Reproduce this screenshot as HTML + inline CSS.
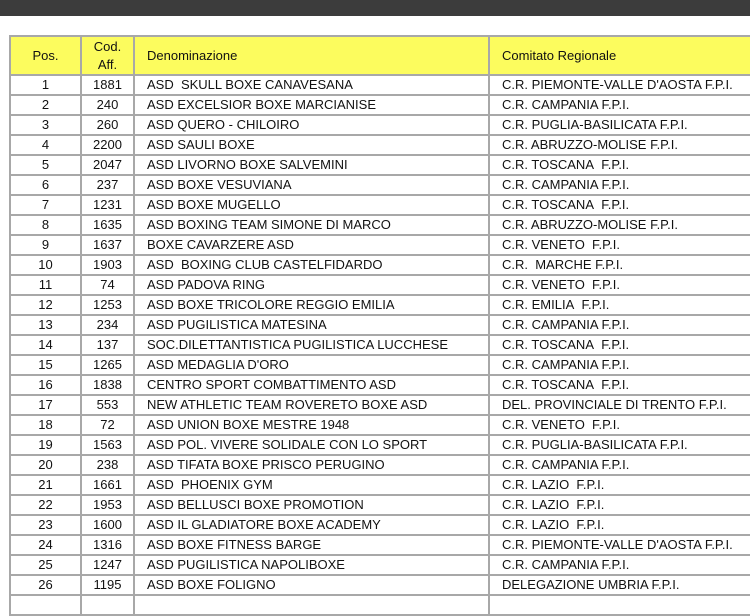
<!DOCTYPE html>
<html><head><meta charset="utf-8"><style>
html,body{margin:0;padding:0;background:#fff;width:750px;height:600px;overflow:hidden;font-family:"Liberation Sans",sans-serif;}
.bar{position:absolute;left:0;top:0;width:750px;height:16px;background:#3c3c3c;}
table{position:absolute;left:9px;top:35px;border-collapse:collapse;table-layout:fixed;width:800px;font-size:13px;letter-spacing:0;color:#111;}
td{border:2px solid #a8a8a8;height:18px;padding:0;white-space:nowrap;overflow:hidden;line-height:18px;}
tr.h td{background:#fcfc5e;height:37px;line-height:18px;}
td.c{text-align:center;}
td.l{padding-left:12px;}
</style></head><body>
<div class="bar"></div>
<table>
<colgroup><col style="width:71px"><col style="width:53px"><col style="width:355px"><col style="width:321px"></colgroup>
<tr class="h"><td class="c">Pos.</td><td class="c">Cod.<br>Aff.</td><td class="l">Denominazione</td><td class="l">Comitato Regionale</td></tr>
<tr><td class="c">1</td><td class="c">1881</td><td class="l">ASD&nbsp; SKULL BOXE CANAVESANA</td><td class="l">C.R. PIEMONTE-VALLE D'AOSTA F.P.I.</td></tr>
<tr><td class="c">2</td><td class="c">240</td><td class="l">ASD EXCELSIOR BOXE MARCIANISE</td><td class="l">C.R. CAMPANIA F.P.I.</td></tr>
<tr><td class="c">3</td><td class="c">260</td><td class="l">ASD QUERO - CHILOIRO</td><td class="l">C.R. PUGLIA-BASILICATA F.P.I.</td></tr>
<tr><td class="c">4</td><td class="c">2200</td><td class="l">ASD SAULI BOXE</td><td class="l">C.R. ABRUZZO-MOLISE F.P.I.</td></tr>
<tr><td class="c">5</td><td class="c">2047</td><td class="l">ASD LIVORNO BOXE SALVEMINI</td><td class="l">C.R. TOSCANA&nbsp; F.P.I.</td></tr>
<tr><td class="c">6</td><td class="c">237</td><td class="l">ASD BOXE VESUVIANA</td><td class="l">C.R. CAMPANIA F.P.I.</td></tr>
<tr><td class="c">7</td><td class="c">1231</td><td class="l">ASD BOXE MUGELLO</td><td class="l">C.R. TOSCANA&nbsp; F.P.I.</td></tr>
<tr><td class="c">8</td><td class="c">1635</td><td class="l">ASD BOXING TEAM SIMONE DI MARCO</td><td class="l">C.R. ABRUZZO-MOLISE F.P.I.</td></tr>
<tr><td class="c">9</td><td class="c">1637</td><td class="l">BOXE CAVARZERE ASD</td><td class="l">C.R. VENETO&nbsp; F.P.I.</td></tr>
<tr><td class="c">10</td><td class="c">1903</td><td class="l">ASD&nbsp; BOXING CLUB CASTELFIDARDO</td><td class="l">C.R.&nbsp; MARCHE F.P.I.</td></tr>
<tr><td class="c">11</td><td class="c">74</td><td class="l">ASD PADOVA RING</td><td class="l">C.R. VENETO&nbsp; F.P.I.</td></tr>
<tr><td class="c">12</td><td class="c">1253</td><td class="l">ASD BOXE TRICOLORE REGGIO EMILIA</td><td class="l">C.R. EMILIA&nbsp; F.P.I.</td></tr>
<tr><td class="c">13</td><td class="c">234</td><td class="l">ASD PUGILISTICA MATESINA</td><td class="l">C.R. CAMPANIA F.P.I.</td></tr>
<tr><td class="c">14</td><td class="c">137</td><td class="l">SOC.DILETTANTISTICA PUGILISTICA LUCCHESE</td><td class="l">C.R. TOSCANA&nbsp; F.P.I.</td></tr>
<tr><td class="c">15</td><td class="c">1265</td><td class="l">ASD MEDAGLIA D'ORO</td><td class="l">C.R. CAMPANIA F.P.I.</td></tr>
<tr><td class="c">16</td><td class="c">1838</td><td class="l">CENTRO SPORT COMBATTIMENTO ASD</td><td class="l">C.R. TOSCANA&nbsp; F.P.I.</td></tr>
<tr><td class="c">17</td><td class="c">553</td><td class="l">NEW ATHLETIC TEAM ROVERETO BOXE ASD</td><td class="l">DEL. PROVINCIALE DI TRENTO F.P.I.</td></tr>
<tr><td class="c">18</td><td class="c">72</td><td class="l">ASD UNION BOXE MESTRE 1948</td><td class="l">C.R. VENETO&nbsp; F.P.I.</td></tr>
<tr><td class="c">19</td><td class="c">1563</td><td class="l">ASD POL. VIVERE SOLIDALE CON LO SPORT</td><td class="l">C.R. PUGLIA-BASILICATA F.P.I.</td></tr>
<tr><td class="c">20</td><td class="c">238</td><td class="l">ASD TIFATA BOXE PRISCO PERUGINO</td><td class="l">C.R. CAMPANIA F.P.I.</td></tr>
<tr><td class="c">21</td><td class="c">1661</td><td class="l">ASD&nbsp; PHOENIX GYM</td><td class="l">C.R. LAZIO&nbsp; F.P.I.</td></tr>
<tr><td class="c">22</td><td class="c">1953</td><td class="l">ASD BELLUSCI BOXE PROMOTION</td><td class="l">C.R. LAZIO&nbsp; F.P.I.</td></tr>
<tr><td class="c">23</td><td class="c">1600</td><td class="l">ASD IL GLADIATORE BOXE ACADEMY</td><td class="l">C.R. LAZIO&nbsp; F.P.I.</td></tr>
<tr><td class="c">24</td><td class="c">1316</td><td class="l">ASD BOXE FITNESS BARGE</td><td class="l">C.R. PIEMONTE-VALLE D'AOSTA F.P.I.</td></tr>
<tr><td class="c">25</td><td class="c">1247</td><td class="l">ASD PUGILISTICA NAPOLIBOXE</td><td class="l">C.R. CAMPANIA F.P.I.</td></tr>
<tr><td class="c">26</td><td class="c">1195</td><td class="l">ASD BOXE FOLIGNO</td><td class="l">DELEGAZIONE UMBRIA F.P.I.</td></tr>
<tr><td class="c">&nbsp;</td><td class="c"></td><td class="l"></td><td class="l"></td></tr>
</table>
</body></html>
